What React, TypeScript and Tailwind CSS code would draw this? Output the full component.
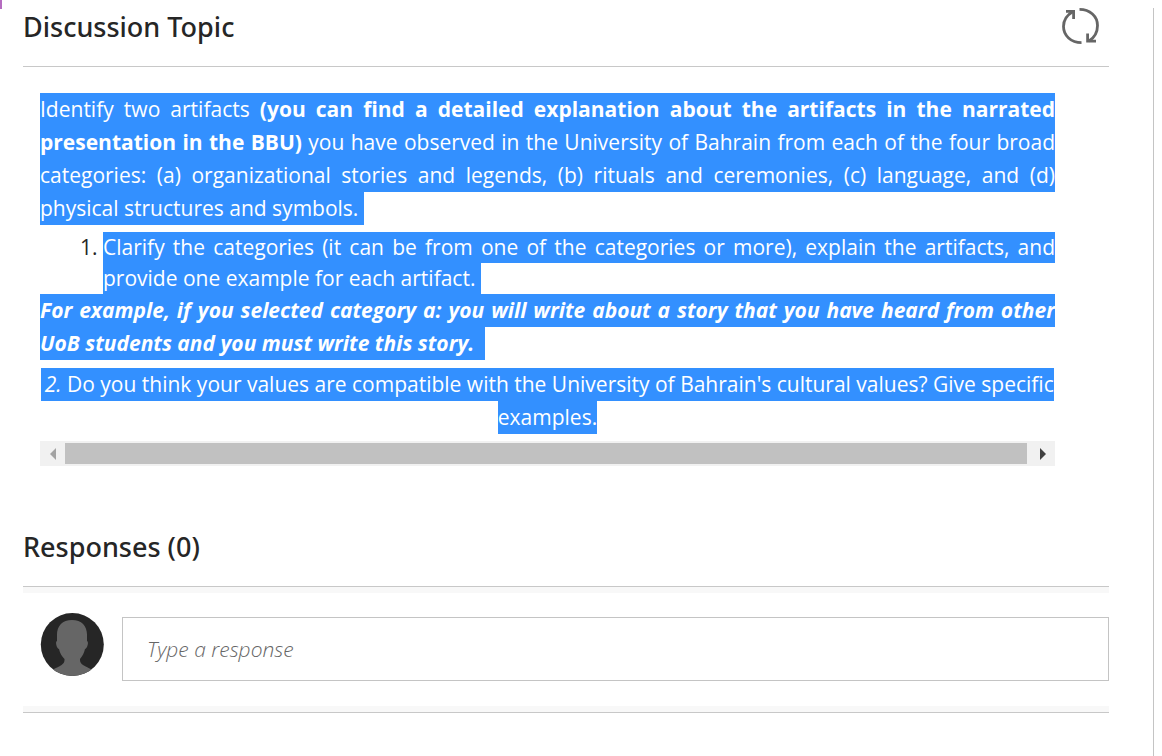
import type { ReactNode } from "react";

const content = {
  topicTitle: "Discussion Topic",
  responsesTitle: "Responses (0)",
  placeholder: "Type a response",
};

function RefreshIcon() {
  return (
    <svg
      viewBox="0 0 38 38"
      className="h-[38px] w-[38px]"
      fill="none"
      stroke="#666666"
      strokeWidth="2.8"
      aria-hidden
    >
      <path d="M17.500 1.400C28 1.400 35.500 8.500 35.500 17.500C35.500 24 32.500 29.500 27 33" />
      <path d="M19.500 34.600C9 34.600 1.500 27.500 1.500 18.500C1.500 12 5 7 11 3.500" />
      <path d="M4 3.400h7.600V11" />
      <path d="M25.600 25.500v7.600h8.400" />
    </svg>
  );
}

function Avatar() {
  return (
    <svg
      viewBox="0 0 64 64"
      className="h-16 w-16 shrink-0"
      role="img"
      aria-label="Profile"
    >
      <clipPath id="avatar-clip">
        <circle cx="32.3" cy="31.5" r="31.5" />
      </clipPath>
      <g clipPath="url(#avatar-clip)">
        <rect width="64" height="64" fill="#262626" />
        <path
          fill="#666666"
          d="M32 7C22 7 16.500 13.500 17 23C17 25 17 26.500 17 28C15 28.500 16.500 35.500 19 36C20 40.500 21.500 43 24.500 46C25 51.500 20 53 13 56.500V64H52V56.500C45 53 39.500 51.500 40 46C42.500 43 44 40.500 45 36C47.500 35.500 49 28.500 47 28C47 26.500 47 25 47 23C47.500 13.500 42 7 32 7Z"
        />
      </g>
    </svg>
  );
}

function Marked({ children }: { children: ReactNode }) {
  return <span className="bg-[#3390ff] pt-[2px] pb-[3px]">{children}</span>;
}

function ScrollBar() {
  return (
    <div className="mt-[7px] flex h-[25px] items-center bg-[#f1f1f1]">
      <button
        type="button"
        aria-label="Scroll left"
        className="flex h-full w-[25px] items-center justify-center"
      >
        <svg viewBox="0 0 6 12" className="h-3 w-[6px]" fill="#a3a3a3">
          <path d="M6 0v12L0 6z" />
        </svg>
      </button>
      <div className="h-[21px] flex-1 bg-[#c1c1c1]" />
      <button
        type="button"
        aria-label="Scroll right"
        className="flex h-full w-7 items-center justify-center pl-1"
      >
        <svg viewBox="0 0 6 12" className="h-3 w-[6px]" fill="#404040">
          <path d="M0 0v12l6-6z" />
        </svg>
      </button>
    </div>
  );
}

function Topic() {
  return (
    <div className="pt-[26px] pr-[54px] pl-[17px] text-[21px] leading-[33px] text-white">
      <p className="text-justify">
        <Marked>
          Identify two artifacts{" "}
          <b className="font-bold">
            (you can find a detailed explanation about the artifacts in the
            narrated presentation in the BBU)
          </b>{" "}
          you have observed in the University of Bahrain from each of the four
          broad categories: (a) organizational stories and legends, (b) rituals
          and ceremonies, (c) language, and (d) physical structures and
          symbols.&nbsp;
        </Marked>
      </p>
      <ol className="mt-[7px] list-decimal pl-[63px] text-justify leading-[31px] marker:text-[#262626]">
        <li>
          <span className="bg-[#3390ff] pt-px pb-[2px]">
            Clarify the categories (it can be from one of the categories or
            more), explain the artifacts, and provide one example for each
            artifact.&nbsp;
          </span>
        </li>
      </ol>
      <p className="text-justify font-bold italic">
        <Marked>
          For example, if you selected category a: you will write about a story
          that you have heard from other UoB students and you must write this
          story.&nbsp;&nbsp;
        </Marked>
      </p>
      <p className="mt-2 text-center">
        <Marked>
          &thinsp;<i>2.</i> Do you think your values are compatible with the
          University of Bahrain's cultural values? Give specific examples.
        </Marked>
      </p>
      <ScrollBar />
    </div>
  );
}

export default function App() {
  return (
    <div className="relative min-h-screen bg-white pr-2 font-['Open_Sans',sans-serif] text-[#262626]">
      <span className="absolute top-0 left-0 h-[9px] w-[2px] bg-[#b56cc0]" />
      <div className="flex min-h-screen flex-col">
        <div className="h-2" />
        <main className="flex-1 border-r border-[#c4c4c4] pr-11 pl-[23px]">
          <header className="flex h-[59px] items-start justify-between border-b border-[#c8c8c8]">
            <h1 className="font-['Noto_Sans',sans-serif] text-[27px] leading-[38px] font-medium">
              {content.topicTitle}
            </h1>
            <button type="button" aria-label="Refresh" className="mr-[9px]">
              <RefreshIcon />
            </button>
          </header>
          <Topic />
          <h2 className="mt-[62px] font-['Noto_Sans',sans-serif] text-[27px] leading-[38px] font-medium">
            {content.responsesTitle}
          </h2>
          <section className="mt-5 border-y border-[#c8c8c8]">
            <div className="h-[6px] bg-[#f8f8f8]" />
            <div className="flex items-start gap-[18px] pt-5 pb-[25px] pl-[17px]">
              <Avatar />
              <input
                type="text"
                aria-label={content.placeholder}
                placeholder={content.placeholder}
                className="mt-1 h-16 min-w-0 flex-1 border border-[#c4c4c4] px-6 text-[21px] placeholder:font-light placeholder:text-[#666666] placeholder:italic"
              />
            </div>
            <div className="h-[6px] bg-[#f8f8f8]" />
          </section>
        </main>
      </div>
    </div>
  );
}
